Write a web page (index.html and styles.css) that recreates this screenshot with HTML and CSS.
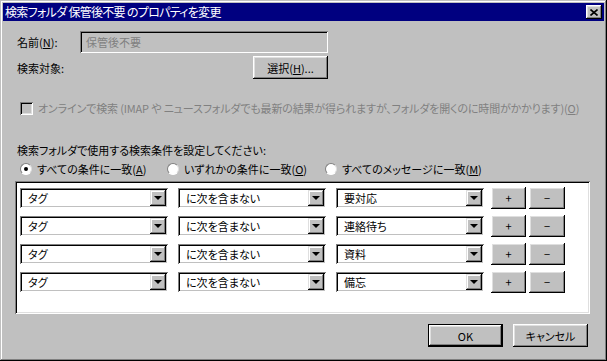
FILE: index.html
```html
<!DOCTYPE html>
<html lang="ja">
<head>
    <meta charset="UTF-8">
    <meta name="viewport" content="width=device-width, initial-scale=1.0">
    <link rel="stylesheet" href="styles.css">
</head>
<body>
    <div class="window">
        <div class="titlebar">
            <span class="title">検索フォルダ 保管後不要 のプロパティを変更</span>
            <button class="close-btn" aria-label="閉じる">
                <svg width="8" height="7" viewBox="0 0 8 7"><path d="M0.5 0.5L7.5 6.5M7.5 0.5L0.5 6.5" stroke="#000" stroke-width="1.6" fill="none"/></svg>
            </button>
        </div>

        <div class="dialog">
            <div class="form-grid">
                <span class="label">名前(<u>N</u>):</span>
                <div class="textbox disabled">保管後不要</div>
                <span class="label">検索対象:</span>
                <button class="btn btn-select">選択(<u>H</u>)...</button>
            </div>

            <div class="check-row disabled-text">
                <span class="checkbox"></span>
                <span class="check-label">オンラインで検索 (IMAP や ニュースフォルダでも最新の結果が得られますが、フォルダを開くのに時間がかかります)(<u>O</u>)</span>
            </div>

            <p class="criteria-label">検索フォルダで使用する検索条件を設定してください:</p>

            <div class="radio-row">
                <span class="radio-item r-all"><span class="radio checked"></span><span>すべての条件に一致(<u>A</u>)</span></span>
                <span class="radio-item r-any"><span class="radio"></span><span>いずれかの条件に一致(<u>O</u>)</span></span>
                <span class="radio-item"><span class="radio"></span><span>すべてのメッセージに一致(<u>M</u>)</span></span>
            </div>

            <div class="term-list">
                <div class="term">
                    <div class="combo"><span class="combo-text">タグ</span><span class="combo-arrow"></span></div>
                    <div class="combo"><span class="combo-text">に次を含まない</span><span class="combo-arrow"></span></div>
                    <div class="combo"><span class="combo-text">要対応</span><span class="combo-arrow"></span></div>
                    <button class="btn btn-small btn-plus">+</button>
                    <button class="btn btn-small btn-minus">−</button>
                </div>
                <div class="term">
                    <div class="combo"><span class="combo-text">タグ</span><span class="combo-arrow"></span></div>
                    <div class="combo"><span class="combo-text">に次を含まない</span><span class="combo-arrow"></span></div>
                    <div class="combo"><span class="combo-text">連絡待ち</span><span class="combo-arrow"></span></div>
                    <button class="btn btn-small btn-plus">+</button>
                    <button class="btn btn-small btn-minus">−</button>
                </div>
                <div class="term">
                    <div class="combo"><span class="combo-text">タグ</span><span class="combo-arrow"></span></div>
                    <div class="combo"><span class="combo-text">に次を含まない</span><span class="combo-arrow"></span></div>
                    <div class="combo"><span class="combo-text">資料</span><span class="combo-arrow"></span></div>
                    <button class="btn btn-small btn-plus">+</button>
                    <button class="btn btn-small btn-minus">−</button>
                </div>
                <div class="term">
                    <div class="combo"><span class="combo-text">タグ</span><span class="combo-arrow"></span></div>
                    <div class="combo"><span class="combo-text">に次を含まない</span><span class="combo-arrow"></span></div>
                    <div class="combo"><span class="combo-text">備忘</span><span class="combo-arrow"></span></div>
                    <button class="btn btn-small btn-plus">+</button>
                    <button class="btn btn-small btn-minus">−</button>
                </div>
            </div>

            <div class="footer">
                <button class="btn btn-dialog btn-default">OK</button>
                <button class="btn btn-dialog">キャンセル</button>
            </div>
        </div>
    </div>
</body>
</html>
```

FILE: styles.css
```css
html, body {
    margin: 0;
    padding: 0;
    width: 607px;
    height: 361px;
    overflow: hidden;
    background: #c0c0c0;
}

body {
    font-family: "Noto Sans CJK JP", "Noto Sans", sans-serif;
    font-size: 11px;
    line-height: 14px;
    font-feature-settings: "palt";
    color: #000;
}

u {
    text-decoration: underline;
    text-underline-offset: 1px;
}

button {
    font: inherit;
    color: inherit;
    margin: 0;
    padding: 0;
    border: 0;
}

/* window frame */
.window {
    box-sizing: border-box;
    width: 607px;
    height: 361px;
    padding: 3px;
    background: #c0c0c0;
    box-shadow:
        inset -1px -1px #000,
        inset 1px 1px #c0c0c0,
        inset -2px -2px #808080,
        inset 2px 2px #fff;
    display: flex;
    flex-direction: column;
}

.titlebar {
    height: 18px;
    background: #000080;
    color: #fff;
    display: flex;
    align-items: center;
    justify-content: space-between;
    padding: 0 2px 0 2px;
}

.title {
    font-size: 12px;
    letter-spacing: -0.7px;
}

.close-btn {
    width: 16px;
    height: 14px;
    background: #c0c0c0;
    display: flex;
    align-items: center;
    justify-content: center;
    box-shadow:
        inset -1px -1px #000,
        inset 1px 1px #fff,
        inset -2px -2px #808080,
        inset 2px 2px #dfdfdf;
}

/* raised push button */
.btn {
    background: #c0c0c0;
    box-shadow:
        inset -1px -1px #000,
        inset 1px 1px #fff,
        inset -2px -2px #808080,
        inset 2px 2px #dfdfdf;
    display: flex;
    align-items: center;
    justify-content: center;
}

.dialog {
    flex: 1;
    padding: 10px 16px 0 14px;
    display: flex;
    flex-direction: column;
}

.form-grid {
    display: grid;
    grid-template-columns: 63px 173px 75px;
    grid-template-rows: 22px 23px;
    row-gap: 3px;
    align-items: center;
}

.label {
    grid-column: 1;
}

.textbox {
    grid-column: 2 / 4;
    height: 22px;
    box-sizing: border-box;
    padding: 4px 6px;
    box-shadow:
        inset 1px 1px #808080,
        inset -1px -1px #fff,
        inset 2px 2px #000,
        inset -2px -2px #c0c0c0;
}

.textbox.disabled {
    background: #c0c0c0;
    color: #808080;
}

.btn-select {
    grid-column: 3;
    height: 23px;
}

.check-row {
    margin-top: 22px;
    display: flex;
    align-items: center;
    gap: 5px;
    padding-left: 3px;
    white-space: nowrap;
}

.check-label {
    letter-spacing: -0.15px;
}

.disabled-text {
    color: #808080;
}

.checkbox {
    width: 13px;
    height: 13px;
    flex: none;
    box-sizing: border-box;
    background: #c0c0c0;
    box-shadow:
        inset 1px 1px #808080,
        inset -1px -1px #fff,
        inset 2px 2px #000,
        inset -2px -2px #dfdfdf;
}

.criteria-label {
    margin: 28px 0 0 0;
}

.radio-row {
    margin-top: 5px;
    display: flex;
    align-items: center;
    padding-left: 3px;
}

.radio-item {
    display: flex;
    align-items: center;
    gap: 5px;
    white-space: nowrap;
}

.r-all {
    width: 147px;
}

.r-any {
    width: 158px;
}

.radio {
    width: 12px;
    height: 12px;
    flex: none;
    box-sizing: border-box;
    border-radius: 50%;
    background: #fff;
    border: 1px solid;
    border-color: #808080 #dfdfdf #fff #808080;
    position: relative;
}

.radio.checked::after {
    content: "";
    position: absolute;
    left: 3px;
    top: 3px;
    width: 4px;
    height: 4px;
    border-radius: 50%;
    background: #000;
}

/* search terms box */
.term-list {
    margin: 5px 0 0 -2px;
    width: 575px;
    height: 133px;
    box-sizing: border-box;
    background: #fff;
    padding: 6px 5px;
    display: flex;
    flex-direction: column;
    gap: 6px;
    box-shadow:
        inset 1px 1px #808080,
        inset -1px -1px #fff,
        inset 2px 2px #000,
        inset -2px -2px #dfdfdf;
}

.term {
    display: flex;
    align-items: center;
    height: 22px;
    gap: 10px;
}

.combo {
    width: 148px;
    height: 20px;
    box-sizing: border-box;
    padding: 2px;
    display: flex;
    align-items: center;
    background: #fff;
    box-shadow:
        inset 1px 1px #808080,
        inset -1px -1px #fff,
        inset 2px 2px #000,
        inset -2px -2px #c0c0c0;
}

.combo-text {
    flex: 1;
    padding-left: 6px;
}

.combo-arrow {
    width: 16px;
    height: 16px;
    background: #c0c0c0;
    position: relative;
    box-shadow:
        inset -1px -1px #000,
        inset 1px 1px #dfdfdf,
        inset -2px -2px #808080,
        inset 2px 2px #fff;
}

.combo-arrow::after {
    content: "";
    position: absolute;
    left: 4px;
    top: 6px;
    border-left: 4px solid transparent;
    border-right: 4px solid transparent;
    border-top: 4px solid #000;
}

.btn-small {
    width: 35px;
    height: 22px;
    font-size: 11px;
}

.btn-plus {
    margin-left: -3px;
}

.btn-minus {
    margin-left: -7px;
    width: 36px;
}

.footer {
    margin-top: 10px;
    display: flex;
    justify-content: flex-end;
    gap: 10px;
}

.btn-dialog {
    width: 75px;
    height: 23px;
}

.btn-default {
    box-shadow:
        inset 1px 1px #000,
        inset -1px -1px #000,
        inset -2px -2px #000,
        inset 2px 2px #fff,
        inset -3px -3px #808080,
        inset 3px 3px #dfdfdf;
}
```
